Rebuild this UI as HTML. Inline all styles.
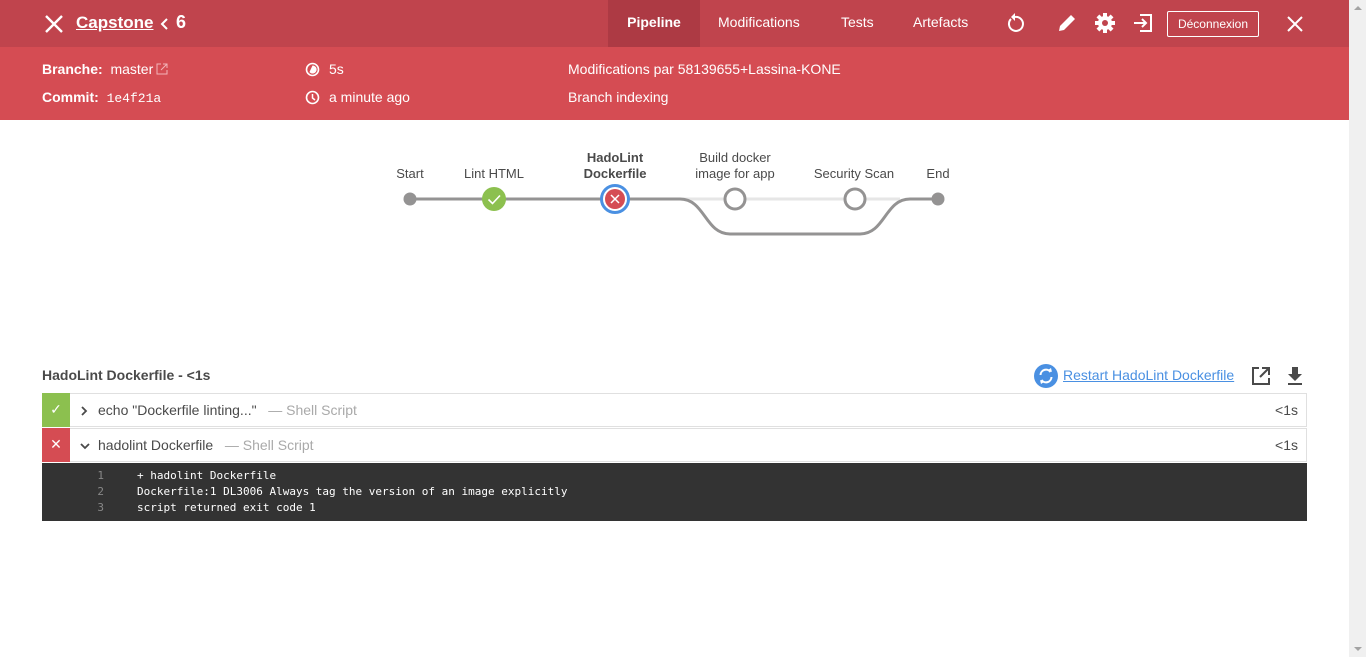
<!DOCTYPE html>
<html><head><meta charset="utf-8">
<style>
*{box-sizing:border-box;margin:0;padding:0}
body{width:1366px;height:657px;overflow:hidden;background:#fff;font-family:"Liberation Sans",sans-serif;color:#4a4a4a;position:relative}
.sb{position:absolute;left:1349px;top:0;width:17px;height:657px;background:#f0f0f0}
.sb .u{position:absolute;left:5px;top:6px;width:0;height:0;border-left:4px solid transparent;border-right:4px solid transparent;border-bottom:4px solid #a3a3a3}
.sb .d{position:absolute;left:5px;bottom:6px;width:0;height:0;border-left:4px solid transparent;border-right:4px solid transparent;border-top:4px solid #a3a3a3}
.top{position:absolute;left:0;top:0;width:1349px;height:47px;background:#c0444d;color:#fff}
.sub{position:absolute;left:0;top:47px;width:1349px;height:73px;background:#d54c53;color:#fff;font-size:14px}
.abs{position:absolute}
.tab{position:absolute;top:0;height:47px;line-height:44px;font-size:14px;color:#fff}
.logout{position:absolute;left:1167px;top:11px;width:92px;height:26px;border:1px solid #fff;border-radius:2px;font-size:12px;line-height:24px;text-align:center}
.lbl{font-weight:bold}
.mono{font-family:"Liberation Mono",monospace;font-size:13px}
.node-l{position:absolute;font-size:13px;color:#4a4a4a;text-align:center;line-height:16px}
.row{position:absolute;left:42px;width:1265px;height:34px;border:1px solid #e0e0e0;font-size:14px}
.row .st{position:absolute;left:-1px;top:-1px;width:28px;height:34px;color:#fff;text-align:center;line-height:33px;font-size:14px}
.row .t{position:absolute;left:55px;top:0;line-height:32px;color:#4a4a4a}
.row .g{color:#a9a9a9}
.row .r{position:absolute;right:8px;top:0;line-height:32px;color:#4a4a4a}
.log{position:absolute;left:42px;top:463px;width:1265px;height:58px;background:#333;color:#fff;font-family:"DejaVu Sans Mono","Liberation Mono",monospace;font-size:11px}
.log div{position:absolute;left:0;height:16px;line-height:16px}
.log .n{position:absolute;left:50px;color:#888;width:12px;text-align:right}
.log .c{position:absolute;left:95px;white-space:pre}
</style></head><body>
<div class="top">
  <svg class="abs" style="left:44px;top:14px" width="20" height="20" viewBox="0 0 20 20"><path d="M2 2L18 18M18 2L2 18" stroke="#fff" stroke-width="2.4"/></svg>
  <div class="abs" style="left:76px;top:13px;font-size:17px;font-weight:bold;text-decoration:underline">Capstone</div>
  <svg class="abs" style="left:159px;top:17px" width="10" height="14" viewBox="0 0 10 14"><path d="M8 2L3 7L8 12" stroke="#fff" stroke-width="2" fill="none"/></svg>
  <div class="abs" style="left:176px;top:12px;font-size:18px;font-weight:bold">6</div>
  <div class="tab" style="left:608px;width:92px;background:#ad3a44;text-align:center;font-weight:bold">Pipeline</div>
  <div class="tab" style="left:718px">Modifications</div>
  <div class="tab" style="left:841px">Tests</div>
  <div class="tab" style="left:913px">Artefacts</div>
  <svg class="abs" style="left:1004px;top:12px" width="22" height="22" viewBox="0 0 22 22"><path d="M7 7A7 7 0 1 0 11 5" stroke="#fff" stroke-width="2" fill="none"/><path d="M11 1L11 9L7 5Z" fill="#fff"/></svg>
  <svg class="abs" style="left:1056px;top:12px" width="22" height="22" viewBox="0 0 22 22"><path d="M3 19L4 14L15 3L19 7L8 18Z" fill="#fff"/></svg>
  <svg class="abs" style="left:1094px;top:12px" width="22" height="22" viewBox="0 0 22 22"><g fill="#fff"><circle cx="11" cy="11" r="7"/><rect x="9" y="1" width="4" height="20"/><rect x="1" y="9" width="20" height="4"/><rect x="9" y="1" width="4" height="20" transform="rotate(45 11 11)"/><rect x="9" y="1" width="4" height="20" transform="rotate(-45 11 11)"/></g><circle cx="11" cy="11" r="3" fill="#c0444d"/></svg>
  <svg class="abs" style="left:1132px;top:12px" width="22" height="22" viewBox="0 0 22 22"><path d="M8 3H19V19H8" stroke="#fff" stroke-width="2" fill="none"/><path d="M2 11H13M10 7L14 11L10 15" stroke="#fff" stroke-width="2" fill="none"/></svg>
  <div class="logout">Déconnexion</div>
  <svg class="abs" style="left:1287px;top:16px" width="16" height="16" viewBox="0 0 16 16"><path d="M1 1L15 15M15 1L1 15" stroke="#fff" stroke-width="2"/></svg>
</div>
<div class="sub">
  <div class="abs" style="left:42px;top:14px;white-space:nowrap"><span class="lbl">Branche:</span>&nbsp; master<svg style="margin-left:3px;vertical-align:-1px" width="12" height="12" viewBox="0 0 12 12"><path d="M5 1H1V11H11V7M7 1H11V5M11 1L5 7" stroke="#f2b4b8" stroke-width="1" fill="none"/></svg></div>
  <div class="abs" style="left:42px;top:42px"><span class="lbl">Commit:</span>&nbsp; <span class="mono">1e4f21a</span></div>
  <svg class="abs" style="left:305px;top:15px" width="15" height="15" viewBox="0 0 15 15"><circle cx="7.5" cy="7.5" r="6" stroke="#fff" stroke-width="1.6" fill="none"/><path d="M7.5 3.5A4 4 0 1 1 4.5 10Z" fill="#fff"/></svg>
  <div class="abs" style="left:329px;top:14px">5s</div>
  <svg class="abs" style="left:305px;top:43px" width="15" height="15" viewBox="0 0 15 15"><circle cx="7.5" cy="7.5" r="6" stroke="#fff" stroke-width="1.6" fill="none"/><path d="M7.5 4V8L10 10" stroke="#fff" stroke-width="1.5" fill="none"/></svg>
  <div class="abs" style="left:329px;top:42px">a minute ago</div>
  <div class="abs" style="left:568px;top:14px">Modifications par 58139655+Lassina-KONE</div>
  <div class="abs" style="left:568px;top:42px">Branch indexing</div>
</div>

<div class="node-l" style="left:385px;top:166px;width:50px">Start</div>
<div class="node-l" style="left:450px;top:166px;width:88px">Lint HTML</div>
<div class="node-l" style="left:565px;top:150px;width:100px;font-weight:bold">HadoLint<br>Dockerfile</div>
<div class="node-l" style="left:680px;top:150px;width:110px">Build docker<br>image for app</div>
<div class="node-l" style="left:800px;top:166px;width:108px">Security Scan</div>
<div class="node-l" style="left:918px;top:166px;width:40px">End</div>
<svg class="abs" style="left:0;top:0" width="1349" height="260">
  <path d="M680 199H900" stroke="#e6e6e6" stroke-width="3"/>
  <path d="M410 199H680C705 199 705 234 730 234H860C885 234 885 199 910 199H938" stroke="#949393" stroke-width="3" fill="none"/>
  <circle cx="410" cy="199" r="6.5" fill="#949393"/>
  <circle cx="938" cy="199" r="6.5" fill="#949393"/>
  <circle cx="494" cy="199" r="12" fill="#8cc04f"/>
  <path d="M488.5 199.5L492.5 203.5L500 195.5" stroke="#fff" stroke-width="1.6" fill="none"/>
  <circle cx="615" cy="199" r="13.5" fill="#fff" stroke="#4a90e2" stroke-width="3"/>
  <circle cx="615" cy="199" r="10" fill="#d54c53"/>
  <path d="M611 195L619 203M619 195L611 203" stroke="#fff" stroke-width="1.5"/>
  <circle cx="735" cy="199" r="10" fill="#fff" stroke="#949393" stroke-width="3"/>
  <circle cx="855" cy="199" r="10" fill="#fff" stroke="#949393" stroke-width="3"/>
</svg>

<div class="abs" style="left:42px;top:367px;font-size:14px;font-weight:bold;color:#4a4a4a">HadoLint Dockerfile - &lt;1s</div>
<svg class="abs" style="left:1034px;top:364px" width="24" height="24" viewBox="0 0 24 24"><circle cx="12" cy="12" r="12" fill="#4a90e2"/><path d="M6.5 11A5.5 5.5 0 0 1 16.5 8M17.5 13A5.5 5.5 0 0 1 7.5 16" stroke="#fff" stroke-width="2" fill="none"/><path d="M14 6L18 8L17 4Z M10 18L6 16L7 20Z" fill="#fff"/></svg>
<div class="abs" style="left:1063px;top:367px;font-size:14px;color:#4a90e2;text-decoration:underline">Restart HadoLint Dockerfile</div>
<svg class="abs" style="left:1251px;top:366px" width="20" height="20" viewBox="0 0 20 20"><path d="M8 2H2V18H18V12" stroke="#4a4a4a" stroke-width="2" fill="none"/><path d="M11 2H18V9M18 2L9 11" stroke="#4a4a4a" stroke-width="2" fill="none"/></svg>
<svg class="abs" style="left:1286px;top:366px" width="18" height="20" viewBox="0 0 18 20"><path d="M6 1H12V8H16L9 15L2 8H6Z" fill="#4a4a4a"/><rect x="2" y="17" width="14" height="2" fill="#4a4a4a"/></svg>

<div class="row" style="top:393px">
  <div class="st" style="background:#8cc04f">✓</div>
  <svg class="abs" style="left:37px;top:11px" width="8" height="12" viewBox="0 0 8 12"><path d="M2 2L6 6L2 10" stroke="#4a4a4a" stroke-width="1.8" fill="none"/></svg>
  <div class="t">echo "Dockerfile linting..." &nbsp; <span class="g">— Shell Script</span></div>
  <div class="r">&lt;1s</div>
</div>
<div class="row" style="top:428px">
  <div class="st" style="background:#d54c53">✕</div>
  <svg class="abs" style="left:36px;top:13px" width="12" height="8" viewBox="0 0 12 8"><path d="M2 2L6 6L10 2" stroke="#4a4a4a" stroke-width="1.8" fill="none"/></svg>
  <div class="t">hadolint Dockerfile &nbsp; <span class="g">— Shell Script</span></div>
  <div class="r">&lt;1s</div>
</div>
<div class="log">
  <div style="top:5px;width:100%"><span class="n">1</span><span class="c">+ hadolint Dockerfile</span></div>
  <div style="top:21px;width:100%"><span class="n">2</span><span class="c">Dockerfile:1 DL3006 Always tag the version of an image explicitly</span></div>
  <div style="top:37px;width:100%"><span class="n">3</span><span class="c">script returned exit code 1</span></div>
</div>
<div class="sb"><div class="u"></div><div class="d"></div></div>
</body></html>
